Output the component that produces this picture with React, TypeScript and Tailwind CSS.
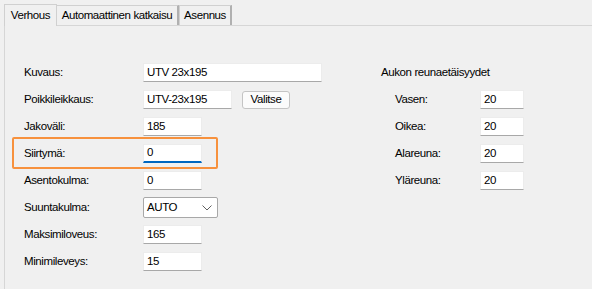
import React from "react";

const font = { fontFamily: '"Liberation Sans", Arial, sans-serif' };

function Box({ w, value, focused }: { w: string; value: string; focused?: boolean }) {
  return (
    <div
      className={`${w} h-[19px] bg-white flex items-center pl-[3px] text-black border border-[#ececec] ${
        focused ? "border-b-2 border-b-[#0067c0]" : "border-b-[#a8a8a8]"
      }`}
    >
      {value}
    </div>
  );
}

function Row({ label, children }: { label: string; children: React.ReactNode }) {
  return (
    <div className="h-[27px] flex items-center">
      <div className="w-[119px] text-black">{label}</div>
      {children}
    </div>
  );
}

function RRow({ label, value }: { label: string; value: string }) {
  return (
    <div className="h-[27px] flex items-center">
      <div className="w-[99px] pl-[14px] text-black">{label}</div>
      <Box w="w-[44px]" value={value} />
    </div>
  );
}

export default function App() {
  return (
    <div
      className="w-[592px] h-[289px] bg-[#f0f0f0] overflow-hidden flex flex-col text-[11.5px] tracking-[-0.4px]"
      style={font}
    >
      <div className="h-[25px] flex items-end pl-[4px] text-black whitespace-nowrap">
        <div className="h-[22px] w-[53px] bg-[#f0f0f0] border border-b-0 border-[#d0d0d0] flex items-center justify-center -mb-px z-10">
          Verhous
        </div>
        <div className="h-[20px] w-[122px] border-t border-r-2 border-[#d0d0d0] border-r-[#b0b0b0] flex items-center justify-center">
          Automaattinen katkaisu
        </div>
        <div className="h-[20px] w-[53px] border-t border-r-2 border-l border-[#d0d0d0] border-r-[#b0b0b0] flex items-center justify-center">
          Asennus
        </div>
      </div>
      <div className="flex-1 ml-[4px] border-l border-t border-[#d6d6d6] flex pt-[33px] pl-[19px]">
        <div className="w-[357px] flex flex-col">
          <Row label="Kuvaus:">
            <Box w="w-[179px]" value="UTV 23x195" />
          </Row>
          <Row label="Poikkileikkaus:">
            <Box w="w-[89px]" value="UTV-23x195" />
            <div className="ml-[10px] w-[48px] h-[18px] rounded-[3px] border border-[#c4c4c4] bg-[#fbfbfb] flex items-center justify-center">
              Valitse
            </div>
          </Row>
          <Row label="Jakoväli:">
            <Box w="w-[59px]" value="185" />
          </Row>
          <div className="relative">
            <div className="absolute left-[-12px] top-[-3px] w-[206px] h-[32px] border-2 border-[#f7913d] rounded-[2px]" />
            <Row label="Siirtymä:">
              <Box w="w-[59px]" value="0" focused />
            </Row>
          </div>
          <Row label="Asentokulma:">
            <Box w="w-[59px]" value="0" />
          </Row>
          <Row label="Suuntakulma:">
            <div className="w-[75px] h-[21px] bg-white border border-[#a8a8a8] rounded-[2px] flex items-center justify-between pl-[3px] pr-[5px]">
              <span>AUTO</span>
              <svg width="10" height="6" viewBox="0 0 10 6" fill="none">
                <path d="M0.5 0.5 L5 5 L9.5 0.5" stroke="#606060" strokeWidth="1" />
              </svg>
            </div>
          </Row>
          <Row label="Maksimiloveus:">
            <Box w="w-[59px]" value="165" />
          </Row>
          <Row label="Minimileveys:">
            <Box w="w-[59px]" value="15" />
          </Row>
        </div>
        <div className="flex flex-col">
          <div className="h-[27px] flex items-center text-black">Aukon reunaetäisyydet</div>
          <RRow label="Vasen:" value="20" />
          <RRow label="Oikea:" value="20" />
          <RRow label="Alareuna:" value="20" />
          <RRow label="Yläreuna:" value="20" />
        </div>
      </div>
    </div>
  );
}
